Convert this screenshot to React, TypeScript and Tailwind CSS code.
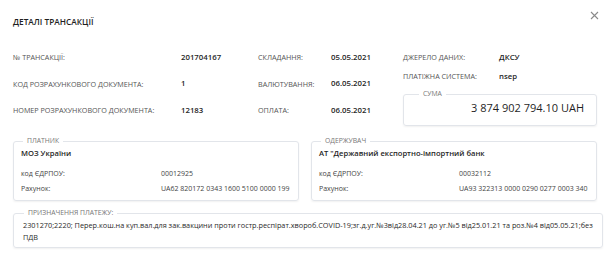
import React from 'react';

const label = 'text-[7.2px] uppercase text-[#555] whitespace-nowrap';
const value = 'text-[7.8px] font-semibold text-[#1f1f1f] whitespace-nowrap';

function Row({ name, val, date, dateLabel }: { name: string; val: string; dateLabel: string; date: string }) {
  return (
    <>
      <div className={`flex items-center ${label}`}>{name}</div>
      <div className={`flex items-center ${value}`}>{val}</div>
      <div className={`flex items-center ${label}`}>{dateLabel}</div>
      <div className={`flex items-center ${value}`}>{date}</div>
    </>
  );
}

function Party({ title, name, code, account }: { title: string; name: string; code: string; account: string }) {
  return (
    <fieldset className="flex-1 border border-[#e2e5ea] rounded-[3px] shadow-[0_1px_2px_rgba(0,0,0,0.06)] px-[7px] pb-[4px]">
      <legend className="ml-[2px] px-1 text-[6.8px] uppercase text-[#777] leading-[10px]">{title}</legend>
      <div className="text-[7.6px] font-semibold text-[#1f1f1f] h-[14px] flex items-center">{name}</div>
      <div className="grid grid-cols-[140px_1fr] text-[7px] text-[#444] mt-[6px] whitespace-nowrap">
        <div className="h-[15px] flex items-center">код ЄДРПОУ:</div>
        <div className="h-[15px] flex items-center">{code}</div>
        <div className="h-[15px] flex items-center">Рахунок:</div>
        <div className="h-[15px] flex items-center">{account}</div>
      </div>
    </fieldset>
  );
}

export default function App() {
  return (
    <div className="w-[610px] h-[256px] bg-white font-['Open_Sans',sans-serif] px-[13px] pt-[9px]">
      <div className="flex items-start justify-between">
        <h1 className="mt-[7px] text-[8.3px] font-semibold text-[#1f1f1f] uppercase">Деталі трансакції</h1>
        <svg width="9" height="9" viewBox="0 0 9 9" className="mt-[2px] mr-[-2px]">
          <path d="M1 1L8 8M8 1L1 8" stroke="#8a8a8a" strokeWidth="1.1" />
        </svg>
      </div>

      <div className="mt-[16px] flex">
        <div className="grid grid-cols-[168px_77px_73px_67px] grid-rows-[26px_27px_26px] w-[385px]">
          <Row name="№ трансакції:" val="201704167" dateLabel="Складання:" date="05.05.2021" />
          <Row name="Код розрахункового документа:" val="1" dateLabel="Валютування:" date="06.05.2021" />
          <Row name="Номер розрахункового документа:" val="12183" dateLabel="Оплата:" date="06.05.2021" />
        </div>
        <div className="flex-1 flex flex-col ml-[5px]">
          <div className="h-[26px] flex items-center">
            <span className={`${label} w-[96px]`}>Джерело даних:</span>
            <span className={value}>ДКСУ</span>
          </div>
          <div className="h-[12px] flex items-center">
            <span className={`${label} w-[96px]`}>Платіжна система:</span>
            <span className={value}>nsep</span>
          </div>
          <fieldset className="mt-[7px] border border-[#e2e5ea] rounded-[3px] shadow-[0_1px_2px_rgba(0,0,0,0.06)] px-3 h-[37px]">
            <legend className="ml-[3px] px-1 text-[6.8px] uppercase text-[#777] leading-[10px]">Сума</legend>
            <div className="text-right text-[11px] font-medium text-[#1f1f1f] leading-[14px] mt-[2px]">3 874 902 794.10 UAH</div>
          </fieldset>
        </div>
      </div>

      <div className="mt-[10px] flex gap-[12px]">
        <Party title="Платник" name="МОЗ України" code="00012925" account="UA62 820172 0343 1600 5100 0000 199" />
        <Party title="Одержувач" name="АТ &quot;Державний експортно-імпортний банк" code="00032112" account="UA93 322313 0000 0290 0277 0003 340" />
      </div>

      <fieldset className="mt-[7px] border border-[#e2e5ea] rounded-[3px] shadow-[0_1px_2px_rgba(0,0,0,0.06)] px-[9px] pb-[4px]">
        <legend className="ml-[1px] px-1 text-[6.8px] uppercase text-[#777] leading-[10px]">Призначення платежу:</legend>
        <p className="text-[7.3px] leading-[12px] text-[#2a2a2a] mt-[1px]">
          <span className="whitespace-nowrap">2301270;2220; Перер.кош.на куп.вал.для зак.вакцини проти гостр.респірат.хвороб.COVID-19;зг.д.уг.№3від28.04.21 до уг.№5 від25.01.21 та роз.№4 від05.05.21;без</span>
          <br />
          ПДВ
        </p>
      </fieldset>
    </div>
  );
}
